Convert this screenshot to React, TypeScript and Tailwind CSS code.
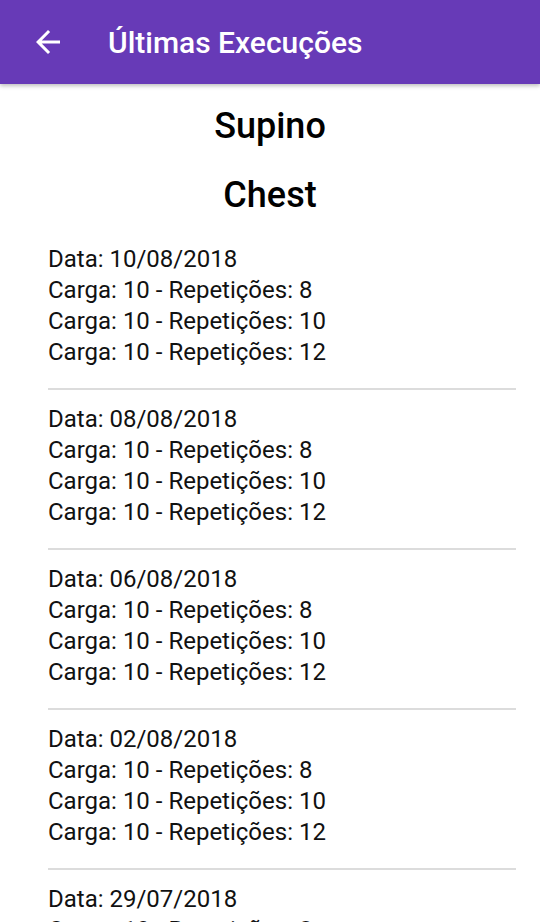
const executions = [
  { date: "10/08/2018", sets: [8, 10, 12] },
  { date: "08/08/2018", sets: [8, 10, 12] },
  { date: "06/08/2018", sets: [8, 10, 12] },
  { date: "02/08/2018", sets: [8, 10, 12] },
  { date: "29/07/2018", sets: [8, 10, 12] },
];

const App = () => {
  return (
    <div className="w-[540px] h-[922px] overflow-hidden bg-white font-['Roboto',sans-serif]">
      <header className="relative z-10 h-[84px] bg-[#673ab7] flex items-center shadow-[0_2px_4px_rgba(0,0,0,0.25)]">
        <div className="w-[108px] pl-[30px]">
          <svg width="36" height="36" viewBox="0 0 24 24" fill="white">
            <path d="M20 11H7.83l5.59-5.59L12 4l-8 8 8 8 1.41-1.41L7.83 13H20v-2z" />
          </svg>
        </div>
        <h1 className="text-white text-[30px] font-medium">Últimas Execuções</h1>
      </header>
      <main className="pl-12 pr-6">
        <h2 className="mt-[20px] text-center pr-6 text-[36px] font-medium text-black leading-[44px]">Supino</h2>
        <h2 className="mt-[25px] text-center pr-6 text-[36px] font-medium text-black leading-[44px]">Chest</h2>
        <ul className="mt-[27px]">
          {executions.map((e) => (
            <li key={e.date} className="border-b-2 border-[#dcdcdc] pb-[20px] mb-[14px] text-[24px] leading-[31px] text-[#111]">
              <p>Data: {e.date}</p>
              {e.sets.map((r) => (
                <p key={r}>Carga: 10 - Repetições: {r}</p>
              ))}
            </li>
          ))}
        </ul>
      </main>
    </div>
  );
};

export default App;
